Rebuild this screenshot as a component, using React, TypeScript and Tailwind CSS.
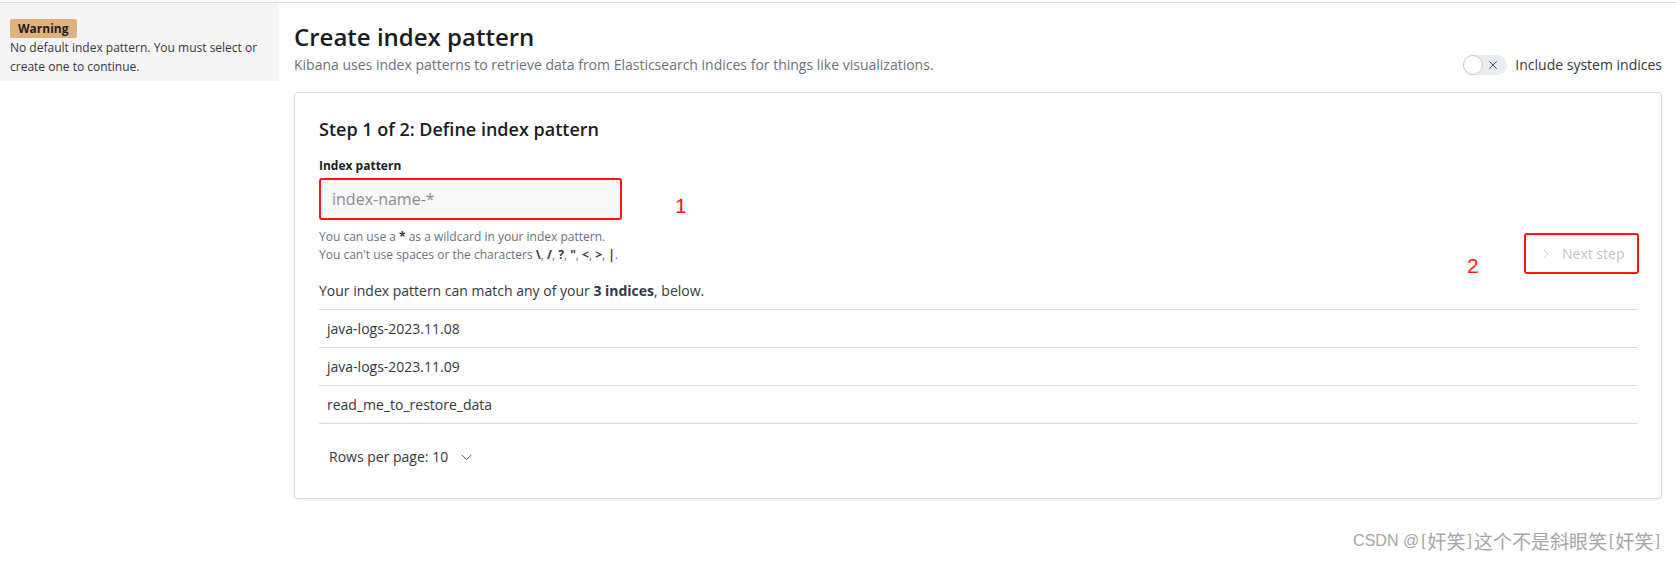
import { ChevronRight, ChevronDown, X } from "lucide-react"

const indices = ["java-logs-2023.11.08", "java-logs-2023.11.09", "read_me_to_restore_data"]

function Toggle() {
  return (
    <div className="relative h-[20px] w-[44px] rounded-full bg-[#e9ecf0]">
      <div className="absolute left-0 top-0 h-[20px] w-[20px] rounded-full border border-[#c4c9d1] bg-white" />
      <X className="absolute left-[23px] top-[3px] h-[14px] w-[14px] text-[#343741]" strokeWidth={1.5} />
    </div>
  )
}

export default function App() {
  return (
    <div className="relative h-[564px] w-full bg-white pt-[2px] font-['Open_Sans',sans-serif] text-[#343741]">
      <div className="flex border-t border-[#dddddd]">
        {/* sidebar */}
        <div className="w-[279px] shrink-0">
          <div className="bg-[#f5f5f5] px-[10px] pb-[5px] pt-4">
            <span className="block w-fit rounded-[2px] bg-[#e0b17a] px-2 text-[12px] font-bold leading-[19px] text-[#1a1c21]">
              Warning
            </span>
            <p className="text-[12px] leading-[19px] text-[#343741]">
              No default index pattern. You must select or create one to continue.
            </p>
          </div>
        </div>

        {/* main */}
        <div className="flex-1 pl-[15px] pr-[14px] pt-[18px]">
          <h1 className="text-[24px] font-semibold leading-[32px] text-[#1a1c21]">Create index pattern</h1>
          <div className="mt-[2px] flex h-[20px] items-center justify-between">
            <p className="text-[14px] leading-[20px] text-[#69707d]">
              Kibana uses index patterns to retrieve data from Elasticsearch indices for things like visualizations.
            </p>
            <div className="flex items-center gap-2">
              <Toggle />
              <span className="text-[14px] leading-[20px]">Include system indices</span>
            </div>
          </div>

          <div className="mt-[17px] rounded-[4px] border border-[#d6d9de] bg-white px-6 pb-[31px] pt-6 shadow-[0_1px_3px_rgba(0,0,0,0.08)]">
            <h2 className="text-[18px] font-semibold leading-[24px] text-[#1a1c21]">Step 1 of 2: Define index pattern</h2>

            <div className="mt-4 flex items-start justify-between">
              <div>
                <div className="text-[12px] font-bold leading-[18px] text-[#1a1c21]">Index pattern</div>
                <div className="mt-[3px] flex h-[42px] w-[303px] items-center rounded-[3px] border-2 border-[#ff1414] bg-[#f8f8f9] pl-[11px]">
                  <input
                    readOnly
                    placeholder="index-name-*"
                    className="w-full bg-transparent text-[16px] outline-none placeholder:text-[#8a8d93]"
                  />
                </div>
                <div className="mt-2 text-[12px] leading-[18px] text-[#69707d]">
                  <p>
                    You can use a <strong className="text-[#343741]">*</strong> as a wildcard in your index pattern.
                  </p>
                  <p>
                    You can't use spaces or the characters <strong className="text-[#343741]">\</strong>,{" "}
                    <strong className="text-[#343741]">/</strong>, <strong className="text-[#343741]">?</strong>,{" "}
                    <strong className="text-[#343741]">"</strong>, <strong className="text-[#343741]">&lt;</strong>,{" "}
                    <strong className="text-[#343741]">&gt;</strong>, <strong className="text-[#343741]">|</strong>.
                  </p>
                </div>
              </div>

              <button className="-mr-[2px] mt-[76px] flex h-[41px] w-[115px] items-center gap-2 rounded-[3px] border-2 border-[#ff1414] pl-[12px] text-[14px] text-[#c2c3c6]">
                <ChevronRight className="h-[16px] w-[16px]" strokeWidth={1.25} />
                Next step
              </button>
            </div>

            <p className="mt-[7px] text-[14px] leading-[20px]">
              Your index pattern can match any of your <strong>3 indices</strong>, below.
            </p>

            <div className="mt-2 border-t border-[#d6d9de]">
              {indices.map((name) => (
                <div key={name} className="flex h-[38px] items-center border-b border-[#d6d9de] px-2 text-[14px]">
                  {name}
                </div>
              ))}
            </div>

            <div className="mt-[23px] flex items-center gap-[10px] pl-[10px] text-[14px] leading-[20px]">
              Rows per page: 10
              <ChevronDown className="h-[17px] w-[17px] text-[#343741]" strokeWidth={1.25} />
            </div>
          </div>
        </div>
      </div>

      {/* red annotations */}
      <span className="absolute left-[675px] top-[195px] font-['Liberation_Sans',sans-serif] text-[21px] leading-[21px] text-[#ff1a1a]">1</span>
      <span className="absolute left-[1467px] top-[255px] font-['Liberation_Sans',sans-serif] text-[21px] leading-[21px] text-[#ff1a1a]">2</span>

      {/* watermark */}
      <span className="absolute bottom-[12px] right-[14px] flex items-center font-['Noto_Sans_CJK_SC',sans-serif] text-[19px] leading-[22px] text-[#a6a6a6]">
        <span className="font-['Liberation_Sans',sans-serif] text-[16px]">CSDN @</span>
        <span className="mx-[2px] font-['Liberation_Sans',sans-serif] text-[16px]">[</span>
        奸笑
        <span className="mx-[2px] font-['Liberation_Sans',sans-serif] text-[16px]">]</span>
        这个不是斜眼笑
        <span className="mx-[2px] font-['Liberation_Sans',sans-serif] text-[16px]">[</span>
        奸笑
        <span className="mx-[2px] font-['Liberation_Sans',sans-serif] text-[16px]">]</span>
      </span>
    </div>
  )
}
